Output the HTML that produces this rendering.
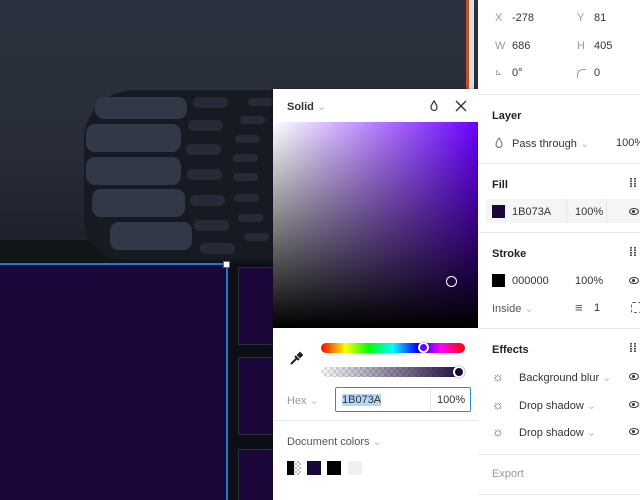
<!DOCTYPE html><html style="overflow:hidden;width:640px;height:500px"><head><style>
*{margin:0;padding:0;box-sizing:border-box}
body{width:640px;height:500px;overflow:hidden;position:relative;background:#292f3b;font-family:"Liberation Sans",sans-serif;font-size:11px;color:#333}
.a{position:absolute}
.t{position:absolute;white-space:nowrap}
.g{color:#999}
.b{font-weight:bold;color:#222}
.hr{position:absolute;left:478px;width:162px;height:1px;background:#e8e8e8}
.pill{position:absolute;background:#323848;border-radius:9px}
.sp{position:absolute;background:#262b37;border-radius:5px}
.eye{position:absolute;width:10px;height:7px;border:1.3px solid #333;border-radius:50%}
.eye::after{content:"";position:absolute;left:2px;top:1px;width:3px;height:3px;background:#333;border-radius:50%}
</style></head><body>
<div class="a" style="left:0;top:0;width:478px;height:264px;background:linear-gradient(180deg,#2b313e 0%,#272c38 60%,#1a1e27 100%)"></div>
<div class="a" style="left:0;top:240px;width:478px;height:24px;background:#111419"></div>
<div class="a" style="left:84px;top:90px;width:200px;height:170px;background:#161a23;border-radius:50px 0 0 40px"></div>
<div class="pill" style="left:95px;top:97px;width:92px;height:22px"></div>
<div class="pill" style="left:86px;top:124px;width:95px;height:28px"></div>
<div class="pill" style="left:86px;top:157px;width:95px;height:28px"></div>
<div class="pill" style="left:92px;top:189px;width:93px;height:28px"></div>
<div class="pill" style="left:110px;top:222px;width:82px;height:28px"></div>
<div class="sp" style="left:193px;top:97px;width:35px;height:11px"></div>
<div class="sp" style="left:188px;top:120px;width:35px;height:11px"></div>
<div class="sp" style="left:186px;top:144px;width:35px;height:11px"></div>
<div class="sp" style="left:187px;top:169px;width:35px;height:11px"></div>
<div class="sp" style="left:190px;top:195px;width:35px;height:11px"></div>
<div class="sp" style="left:194px;top:220px;width:35px;height:11px"></div>
<div class="sp" style="left:200px;top:243px;width:35px;height:11px"></div>
<div class="sp" style="left:248px;top:98px;width:25px;height:8px"></div>
<div class="sp" style="left:240px;top:116px;width:25px;height:8px"></div>
<div class="sp" style="left:235px;top:135px;width:25px;height:8px"></div>
<div class="sp" style="left:233px;top:154px;width:25px;height:8px"></div>
<div class="sp" style="left:233px;top:173px;width:25px;height:8px"></div>
<div class="sp" style="left:234px;top:194px;width:25px;height:8px"></div>
<div class="sp" style="left:238px;top:214px;width:25px;height:8px"></div>
<div class="sp" style="left:244px;top:233px;width:25px;height:8px"></div>
<div class="a" style="left:466px;top:0;width:3px;height:90px;background:#c0502a"></div>
<div class="a" style="left:469px;top:0;width:5px;height:90px;background:#ddd"></div>
<div class="a" style="left:0;top:264px;width:478px;height:236px;background:#0c1016"></div>
<div class="a" style="left:0;top:264px;width:227px;height:236px;background:#1b073a"></div>
<div class="a" style="left:0;top:263px;width:228px;height:2px;background:#1a7ad4"></div>
<div class="a" style="left:226px;top:263px;width:2px;height:237px;background:#1a7ad4"></div>
<div class="a" style="left:223px;top:261px;width:7px;height:7px;background:#fff;border:1.5px solid #1a7ad4"></div>
<div class="a" style="left:238px;top:267px;width:40px;height:78px;background:#1b073a;border:1px solid #2a2f38"></div>
<div class="a" style="left:238px;top:357px;width:40px;height:78px;background:#1b073a;border:1px solid #2a2f38"></div>
<div class="a" style="left:238px;top:449px;width:40px;height:51px;background:#1b073a;border:1px solid #2a2f38;border-bottom:none"></div>
<!-- popup -->
<div class="a" style="left:273px;top:89px;width:205px;height:411px;background:#fff;box-shadow:0 0 4px rgba(0,0,0,.3)"></div>
<div class="t b" style="left:287px;top:100px;color:#333">Solid <span style="color:#bbb;font-weight:normal">⌄</span></div>
<svg class="a" style="left:428px;top:99px" width="12" height="13"><path d="M6 2 C4 5 3 7 3 8.5 A3 3 0 0 0 9 8.5 C9 7 8 5 6 2Z" fill="none" stroke="#333" stroke-width="1.2"/></svg>
<svg class="a" style="left:455px;top:100px" width="12" height="12"><path d="M1 1L11 11M11 1L1 11" stroke="#333" stroke-width="1.4"/></svg>
<div class="a" style="left:273px;top:122px;width:205px;height:206px;background:linear-gradient(to top,#000,rgba(0,0,0,0)),linear-gradient(to right,#fff,#6a00ff)"></div>
<div class="a" style="left:446px;top:276px;width:11px;height:11px;border:1.5px solid #fff;border-radius:50%"></div>
<div class="a" style="left:321px;top:343px;width:144px;height:10px;border-radius:5px;background:linear-gradient(to right,#f00,#ff0 17%,#0f0 33%,#0ff 50%,#00f 67%,#f0f 83%,#f00)"></div>
<div class="a" style="left:418px;top:342px;width:11px;height:11px;border:2px solid #fff;border-radius:50%;background:#6a00ff;box-shadow:0 0 1px #000"></div>
<div class="a" style="left:321px;top:367px;width:144px;height:10px;border-radius:5px;background:linear-gradient(to right,rgba(27,7,58,0),#1b073a),repeating-conic-gradient(#ddd 0 25%,#fff 0 50%) 0 0/6px 6px"></div>
<div class="a" style="left:453px;top:366px;width:12px;height:12px;border:2px solid #fff;border-radius:50%;background:#1b073a;box-shadow:0 0 1px #000"></div>
<svg class="a" style="left:289px;top:351px" width="14" height="15"><path d="M2 13L8 7M6 5L10 9M9 4L11 2L13 4L11 6Z" stroke="#222" stroke-width="2" fill="#222"/></svg>
<div class="t g" style="left:287px;top:394px">Hex <span style="color:#bbb">⌄</span></div>
<div class="a" style="left:335px;top:387px;width:136px;height:25px;border:1.5px solid #2b8ae0;border-radius:2px"></div>
<div class="a" style="left:430px;top:388px;width:1px;height:23px;background:#e5e5e5"></div>
<div class="t" style="left:342px;top:394px;background:#b6d6f7;color:#333">1B073A</div>
<div class="t" style="left:437px;top:394px">100%</div>
<div class="a" style="left:273px;top:420px;width:205px;height:1px;background:#e8e8e8"></div>
<div class="t" style="left:287px;top:435px;color:#555">Document colors <span style="color:#bbb">⌄</span></div>
<div class="a" style="left:287px;top:461px;width:14px;height:14px;background:linear-gradient(to right,#000 50%,transparent 50%),repeating-conic-gradient(#bbb 0 25%,#fff 0 50%) 0 0/4px 4px"></div>
<div class="a" style="left:307px;top:461px;width:14px;height:14px;background:#1b073a"></div>
<div class="a" style="left:327px;top:461px;width:14px;height:14px;background:#000"></div>
<div class="a" style="left:348px;top:461px;width:14px;height:14px;background:#f0f0f0"></div>
<!-- right panel -->
<div class="a" style="left:478px;top:0;width:162px;height:500px;background:#fff"></div>
<div class="t g" style="left:495px;top:12px">X</div><div class="t" style="left:512px;top:12px">-278</div>
<div class="t g" style="left:577px;top:12px">Y</div><div class="t" style="left:594px;top:12px">81</div>
<div class="t g" style="left:495px;top:40px">W</div><div class="t" style="left:512px;top:40px">686</div>
<div class="t g" style="left:577px;top:40px">H</div><div class="t" style="left:594px;top:40px">405</div>
<div class="t g" style="left:495px;top:67px;font-size:9px">⊾</div><div class="t" style="left:512px;top:67px">0°</div>
<div class="a" style="left:577px;top:69px;width:9px;height:9px;border-left:1.2px solid #999;border-top:1.2px solid #999;border-top-left-radius:6px"></div><div class="t" style="left:594px;top:67px">0</div>
<div class="hr" style="top:94px"></div>
<div class="t b" style="left:492px;top:110px">Layer</div>
<svg class="a" style="left:494px;top:137px" width="10" height="12"><path d="M5 1C3 4 2 6 2 7.5A3 3 0 0 0 8 7.5C8 6 7 4 5 1Z" fill="none" stroke="#666" stroke-width="1"/></svg>
<div class="t" style="left:512px;top:137px">Pass through <span style="color:#bbb">⌄</span></div>
<div class="t" style="left:616px;top:137px">100%</div>
<div class="hr" style="top:163px"></div>
<div class="t b" style="left:492px;top:179px">Fill</div>
<div class="t" style="left:629px;top:176px;font-size:12px;font-weight:bold">⁞⁞</div>
<div class="a" style="left:486px;top:199px;width:154px;height:24px;background:#f5f5f5"></div>
<div class="a" style="left:566px;top:199px;width:1px;height:24px;background:#e5e5e5"></div>
<div class="a" style="left:606px;top:199px;width:1px;height:24px;background:#e5e5e5"></div>
<div class="a" style="left:492px;top:205px;width:13px;height:13px;background:#1b073a"></div>
<div class="t" style="left:512px;top:206px">1B073A</div>
<div class="t" style="left:575px;top:206px">100%</div>
<div class="eye" style="left:629px;top:208px"></div>
<div class="hr" style="top:232px"></div>
<div class="t b" style="left:492px;top:248px">Stroke</div>
<div class="t" style="left:629px;top:245px;font-size:12px;font-weight:bold">⁞⁞</div>
<div class="a" style="left:492px;top:274px;width:13px;height:13px;background:#000"></div>
<div class="t" style="left:512px;top:275px">000000</div>
<div class="t" style="left:575px;top:275px">100%</div>
<div class="eye" style="left:629px;top:277px"></div>
<div class="t" style="left:492px;top:302px;color:#555">Inside <span style="color:#bbb">⌄</span></div>
<div class="t" style="left:575px;top:300px;font-size:13px;color:#555">≡</div>
<div class="t" style="left:594px;top:302px">1</div>
<div class="a" style="left:631px;top:302px;width:10px;height:11px;border:1px dashed #666;border-radius:2px"></div>
<div class="hr" style="top:328px"></div>
<div class="t b" style="left:492px;top:344px">Effects</div>
<div class="t" style="left:629px;top:341px;font-size:12px;font-weight:bold">⁞⁞</div>
<div class="t" style="left:492px;top:369px;color:#555;font-size:13px">☼</div><div class="t" style="left:519px;top:371px">Background blur <span style="color:#bbb">⌄</span></div><div class="eye" style="left:629px;top:373px"></div>
<div class="t" style="left:492px;top:397px;color:#555;font-size:13px">☼</div><div class="t" style="left:519px;top:399px">Drop shadow <span style="color:#bbb">⌄</span></div><div class="eye" style="left:629px;top:401px"></div>
<div class="t" style="left:492px;top:424px;color:#555;font-size:13px">☼</div><div class="t" style="left:519px;top:426px">Drop shadow <span style="color:#bbb">⌄</span></div><div class="eye" style="left:629px;top:428px"></div>
<div class="hr" style="top:454px"></div>
<div class="t g" style="left:492px;top:468px">Export</div>
<div class="hr" style="top:494px"></div>
</body></html>
